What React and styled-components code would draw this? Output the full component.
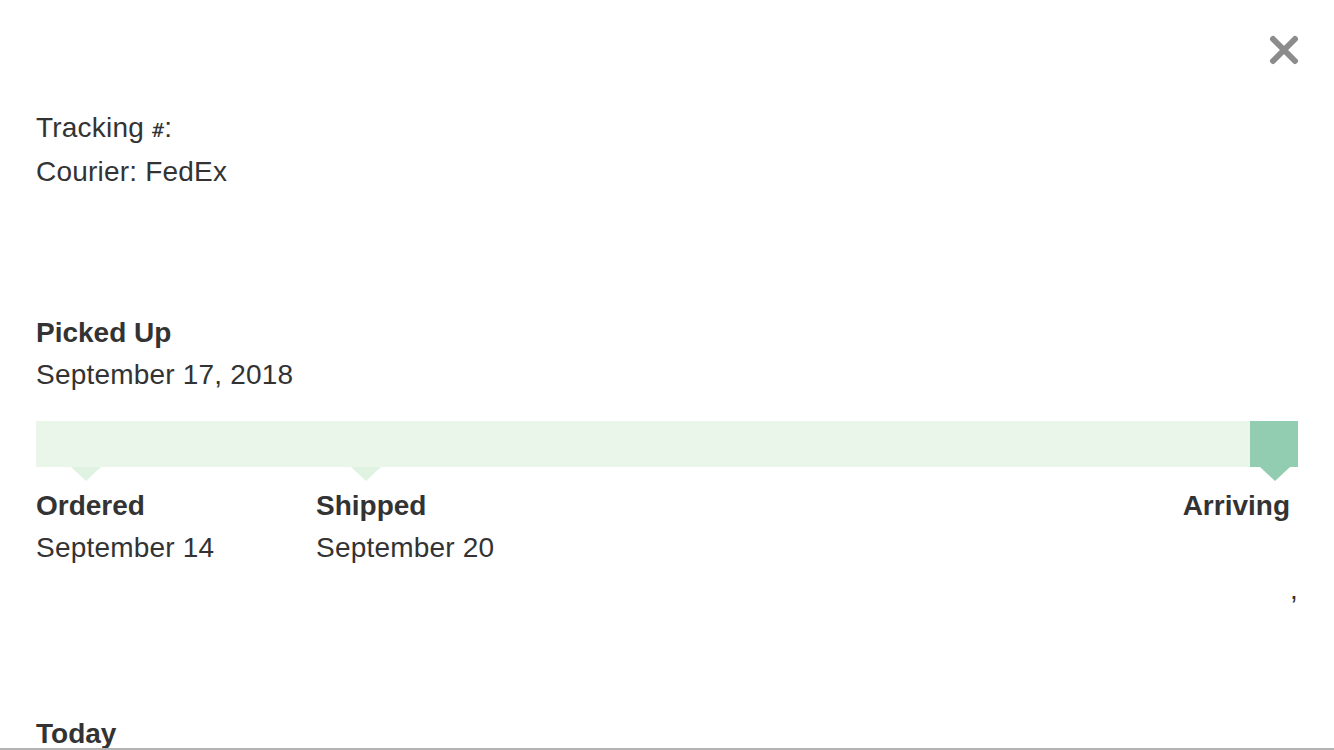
import React from 'react';
import styled, { createGlobalStyle } from 'styled-components';

const GlobalStyle = createGlobalStyle`
  html, body {
    margin: 0;
    padding: 0;
    background: #fff;
    overflow: hidden;
  }
  body {
    font-family: "Liberation Sans", Arial, sans-serif;
    color: #333;
  }
`;

const Screen = styled.div`
  height: 748px;
  overflow: hidden;
  border-bottom: 2px solid #b3b3b3;
`;

const Content = styled.div`
  padding: 0 36px;
  display: flex;
  flex-direction: column;
`;

const TopBar = styled.div`
  display: flex;
  justify-content: flex-end;
  padding-top: 34px;
  margin-right: -2px;
  height: 72px;
  box-sizing: border-box;
`;

const CloseButton = styled.button`
  width: 32px;
  height: 32px;
  padding: 0;
  border: 0;
  background: none;
  cursor: pointer;
  display: flex;
  align-items: center;
  justify-content: center;
`;

const Line = styled.div`
  font-size: 28px;
  line-height: 42px;
  font-weight: ${(p) => (p.$bold ? 700 : 400)};
  letter-spacing: ${(p) => (p.$bold ? '0' : '0.2px')};
  white-space: nowrap;
  margin-right: ${(p) => (p.$hang ? `-${p.$hang}px` : '0')};
`;

const Hash = styled.span`
  font-family: "DejaVu Sans Mono", monospace;
  font-size: 20px;
`;

const Block = styled.div`
  margin-top: ${(p) => p.$top || 0}px;
`;

const Bar = styled.div`
  margin-top: 25px;
  height: 46px;
  display: flex;
  justify-content: flex-end;
  background: #eaf6ea;
`;

const BarDone = styled.div`
  width: 48px;
  background: #92cdb1;
`;

const Milestones = styled.div`
  display: flex;
`;

const Milestone = styled.div`
  display: flex;
  flex-direction: column;
  align-items: ${(p) => (p.$end ? 'flex-end' : 'flex-start')};
  width: ${(p) => (p.$width ? `${p.$width}px` : 'auto')};
  margin-left: ${(p) => (p.$end ? 'auto' : '0')};
  padding-right: ${(p) => (p.$end ? '8px' : '0')};
`;

const Pointer = styled.div`
  width: 0;
  height: 0;
  border-left: 15px solid transparent;
  border-right: 15px solid transparent;
  border-top: 14px solid ${(p) => (p.$active ? '#92cdb1' : '#e0f3e2')};
  margin-left: ${(p) => (p.$offset ? `${p.$offset}px` : '0')};
  margin-bottom: 4px;
`;

const CloseIcon = () => (
  <svg width="32" height="32" viewBox="0 0 32 32">
    <path
      d="M5 5 L27 27 M27 5 L5 27"
      stroke="#8c8c8c"
      strokeWidth="6"
      strokeLinecap="round"
      fill="none"
    />
  </svg>
);

const App = () => {
  return (
    <Screen>
      <GlobalStyle />
      <Content>
        <TopBar>
          <CloseButton aria-label="Close">
            <CloseIcon />
          </CloseButton>
        </TopBar>

        <Block $top={35}>
          <Line>
            Tracking <Hash>#</Hash>:
          </Line>
          <Line>Courier: FedEx</Line>
        </Block>

        <Block $top={119}>
          <Line $bold>Picked Up</Line>
          <Line>September 17, 2018</Line>
        </Block>

        <Bar>
          <BarDone />
        </Bar>

        <Milestones>
          <Milestone $width={280}>
            <Pointer $offset={35} />
            <Line $bold>Ordered</Line>
            <Line>September 14</Line>
          </Milestone>
          <Milestone>
            <Pointer $offset={35} />
            <Line $bold>Shipped</Line>
            <Line>September 20</Line>
          </Milestone>
          <Milestone $end>
            <Pointer $active />
            <Line $bold>Arriving</Line>
            <Line>&nbsp;</Line>
            <Line $hang={8}>,</Line>
          </Milestone>
        </Milestones>

        <Block $top={102}>
          <Line $bold>Today</Line>
        </Block>
      </Content>
    </Screen>
  );
};

export default App;
